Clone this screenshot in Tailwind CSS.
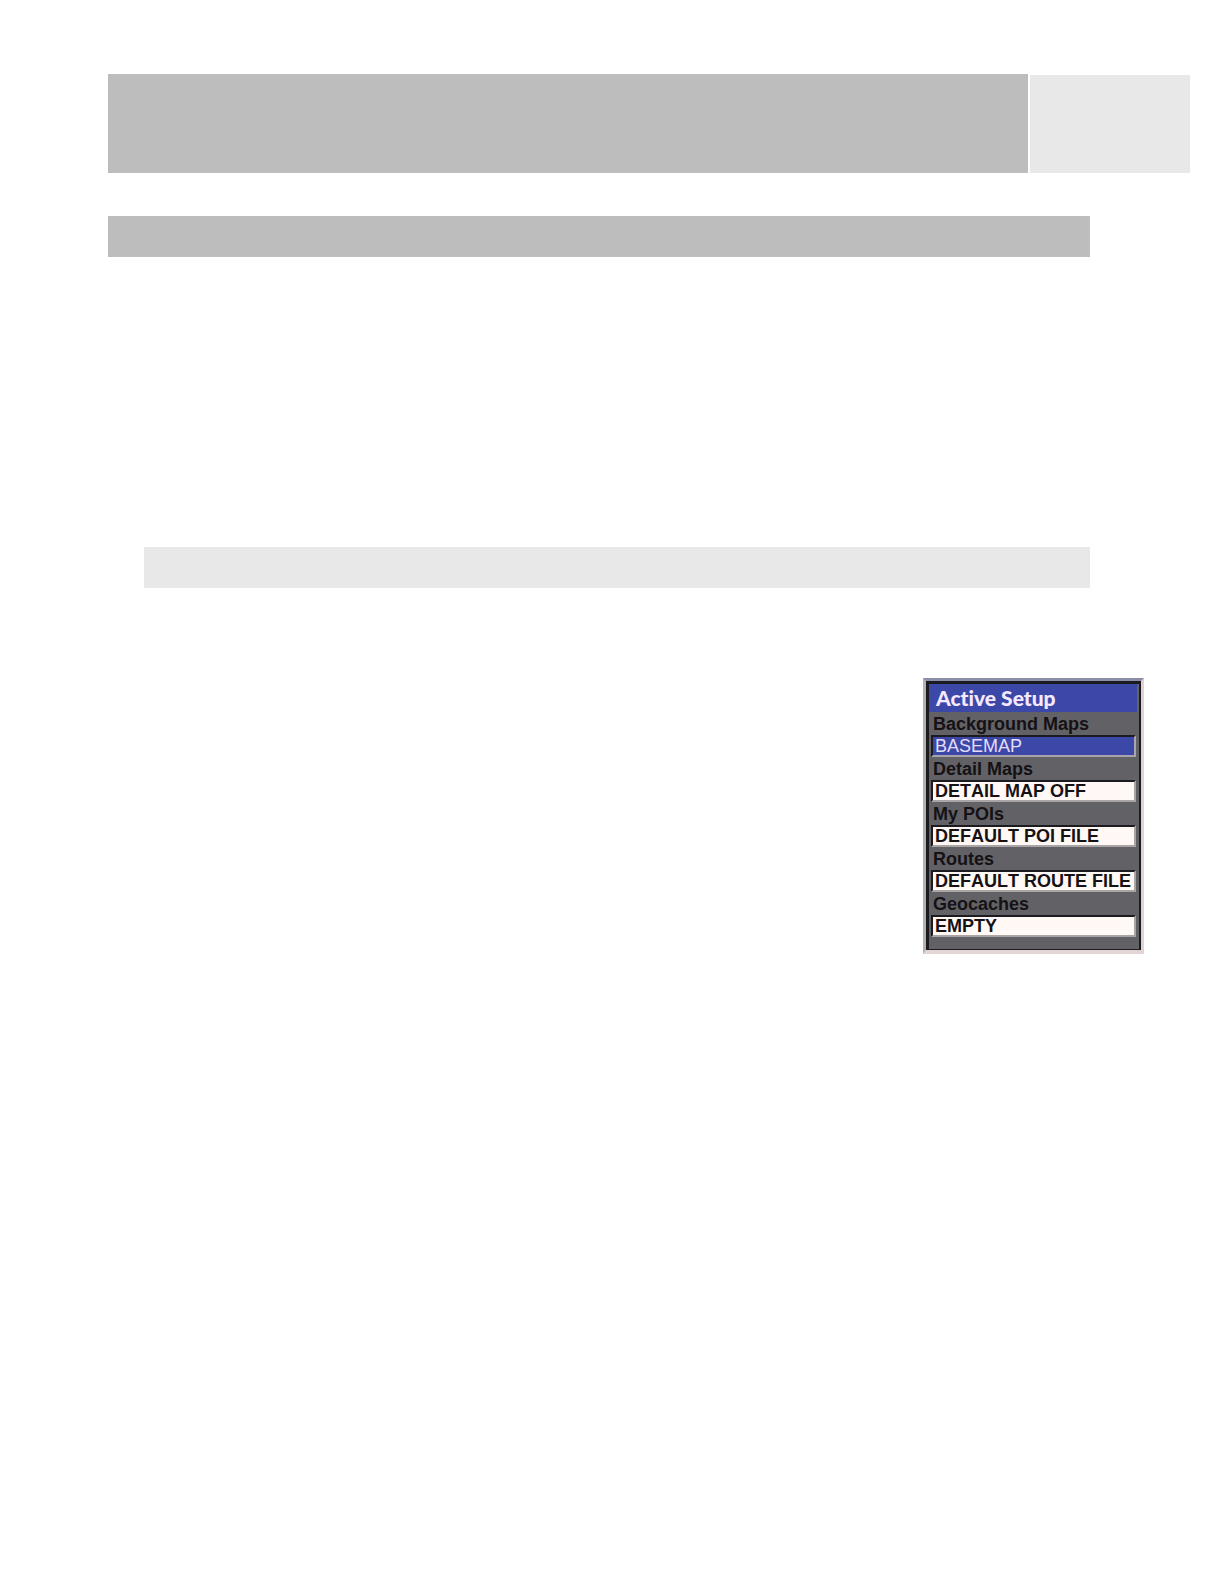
<!DOCTYPE html>
<html lang="en">
<head>
<meta charset="utf-8">
<meta name="viewport" content="width=device-width, initial-scale=1">
<title>Active Setup</title>
<script src="https://cdn.jsdelivr.net/npm/@tailwindcss/browser@4"></script>
</head>
<body class="min-h-screen bg-white font-['Liberation_Sans',Arial,sans-serif]">
<main class="flex flex-col pt-[74px] pr-[34px] pb-20 pl-[108px]">
  <header class="flex h-[99px] gap-[2px]">
    <div class="flex-1 bg-[#bdbdbd]"></div>
    <div class="mt-px w-40 bg-[#e8e8e8]"></div>
  </header>
  <div class="mt-[43px] mr-[100px] h-[41px] bg-[#bdbdbd]"></div>
  <div class="mt-[290px] mr-[100px] ml-9 h-[41px] bg-[#e8e8e8]"></div>

  <form class="mt-[90px] mr-[46px] w-[221px] self-end border-t-[3px] border-r-[3px] border-b-[4px] border-l-[3px] border-t-[#8b8ea8] border-r-[#e0d2d2] border-b-[#e2d5d4] border-l-[#b5b0b4]">
    <div class="border-t-[3px] border-r-2 border-b border-l-[3px] border-[#1b1b20] bg-[#626266] pb-3">
      <h1 class="mr-[2px] h-7 bg-[#3b48a8] pl-[7px] font-['Lato',sans-serif] text-[21px] leading-7 font-black text-[#f6e8ff] [font-variant-ligatures:none]">Active Setup</h1>
      <div class="flex flex-col pr-[3px] pl-[2px] text-lg font-bold text-[#151114] [font-kerning:none]">
        <label for="background" class="h-[23px] pl-[2px] leading-[25px]">Background Maps</label>
        <input id="background" type="text" readonly value="BASEMAP" class="h-[22px] w-full border-2 border-t-[#1b1b20] border-r-[#a9a4ad] border-b-[#a9a4ad] border-l-[#1b1b20] bg-[#3b48a8] pl-[2px] leading-[18px] font-normal text-[#e4dcfa] outline-none">
        <label for="detail" class="h-[23px] pl-[2px] leading-[25px]">Detail Maps</label>
        <input id="detail" type="text" readonly value="DETAIL MAP OFF" class="h-[22px] w-full border-2 border-t-[#1b1b20] border-r-[#a9a4a5] border-b-[#a9a4a5] border-l-[#1b1b20] bg-[#fff8f5] pl-[2px] leading-[18px] outline-none">
        <label for="pois" class="h-[23px] pl-[2px] leading-[25px]">My POIs</label>
        <input id="pois" type="text" readonly value="DEFAULT POI FILE" class="h-[22px] w-full border-2 border-t-[#1b1b20] border-r-[#a9a4a5] border-b-[#a9a4a5] border-l-[#1b1b20] bg-[#fff8f5] pl-[2px] leading-[18px] outline-none">
        <label for="routes" class="h-[23px] pl-[2px] leading-[25px]">Routes</label>
        <input id="routes" type="text" readonly value="DEFAULT ROUTE FILE" class="h-[22px] w-full border-2 border-t-[#1b1b20] border-r-[#a9a4a5] border-b-[#a9a4a5] border-l-[#1b1b20] bg-[#fff8f5] pl-[2px] leading-[18px] outline-none">
        <label for="geocaches" class="h-[23px] pl-[2px] leading-[25px]">Geocaches</label>
        <input id="geocaches" type="text" readonly value="EMPTY" class="h-[22px] w-full border-2 border-t-[#1b1b20] border-r-[#a9a4a5] border-b-[#a9a4a5] border-l-[#1b1b20] bg-[#fff8f5] pl-[2px] leading-[18px] outline-none">
      </div>
    </div>
  </form>
</main>
</body>
</html>
